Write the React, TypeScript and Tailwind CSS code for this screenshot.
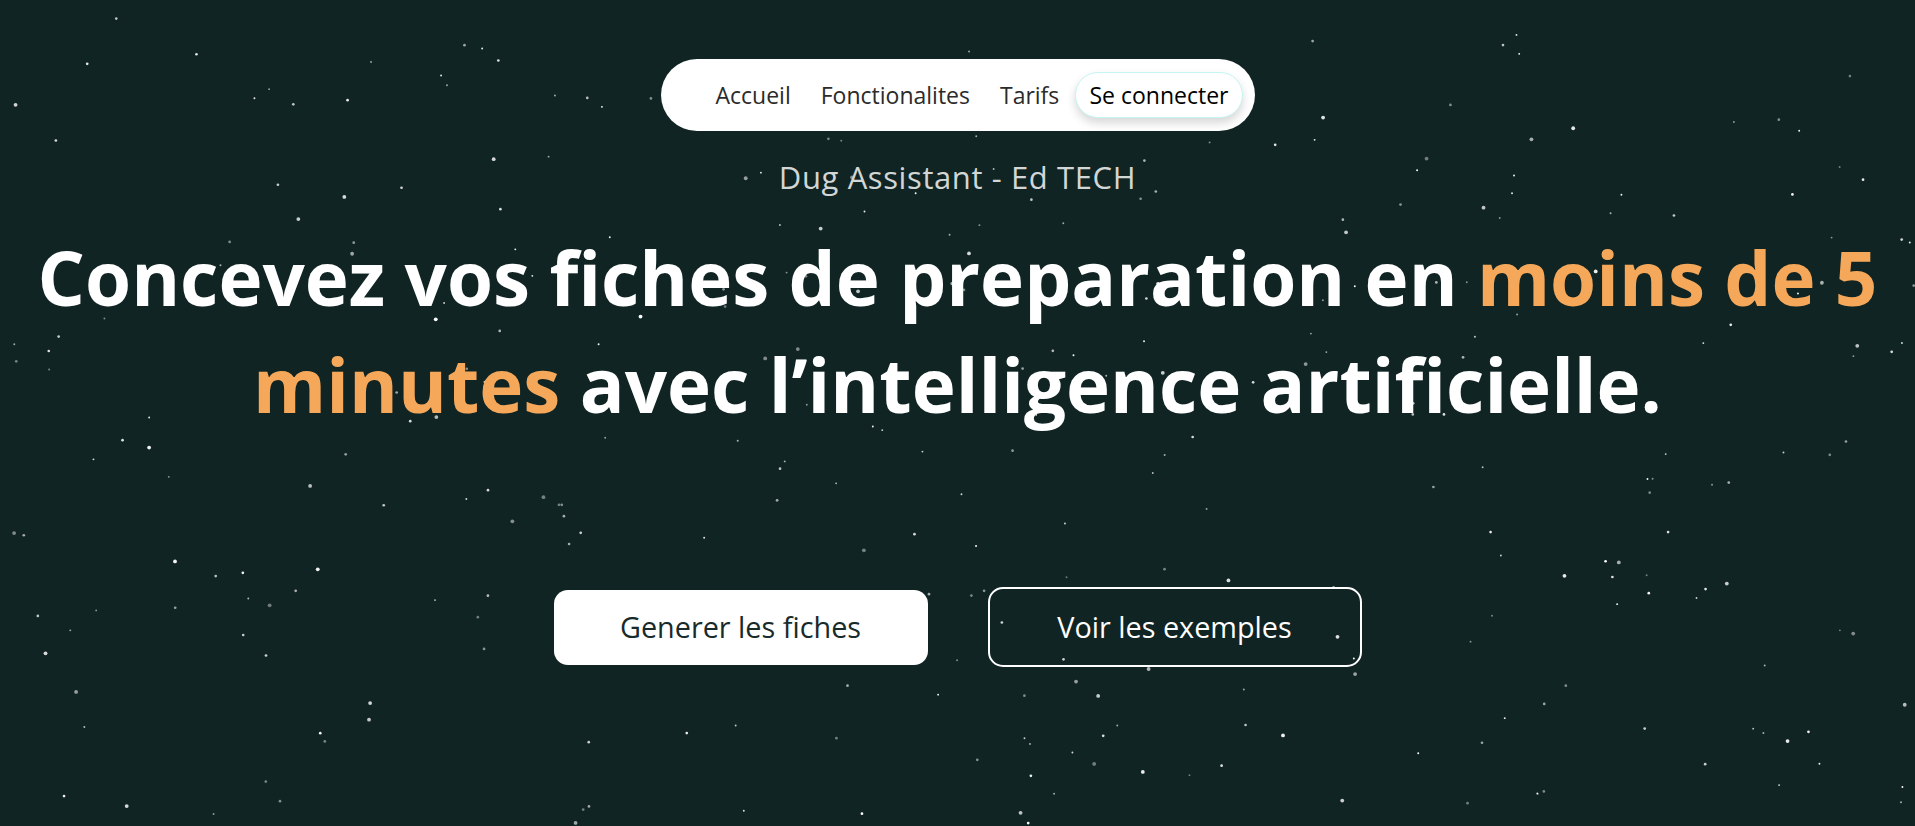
import { useMemo } from 'react';

// small seeded generator so the starfield is the same on every render
function makeStars(count: number, seed: number) {
  let s = seed;
  const rand = () => {
    s = (s * 1664525 + 1013904223) % 4294967296;
    return s / 4294967296;
  };
  const stars = [];
  for (let i = 0; i < count; i++) {
    const big = rand();
    stars.push({
      x: rand() * 1915,
      y: rand() * 826,
      r: big > 0.8 ? 1.9 : big > 0.4 ? 1.35 : 0.95,
      o: 0.4 + rand() * 0.6,
    });
  }
  return stars;
}

function Starfield() {
  const stars = useMemo(() => makeStars(340, 42), []);
  return (
    <svg
      className="absolute inset-0 w-full h-full pointer-events-none"
      viewBox="0 0 1915 826"
      preserveAspectRatio="none"
    >
      {stars.map((st, i) => (
        <circle key={i} cx={st.x} cy={st.y} r={st.r} fill="#ffffff" opacity={st.o} />
      ))}
    </svg>
  );
}

function Navbar() {
  return (
    <nav className="flex items-center w-[594px] h-[72px] bg-white rounded-full pl-[55px] pr-[12px]">
      <div className="flex items-center gap-[30px] text-[23px] text-[#2b2b2b]">
        <a href="#" className="leading-none">Accueil</a>
        <a href="#" className="leading-none">Fonctionalites</a>
        <a href="#" className="leading-none">Tarifs</a>
      </div>
      <button className="ml-auto h-[46px] px-[13px] rounded-full bg-white border border-[#c4f6f2] shadow-[0_5px_10px_rgba(0,0,0,0.16)] text-[23px] text-black leading-none">
        Se connecter
      </button>
    </nav>
  );
}

export default function App() {
  return (
    <div className="relative min-h-[826px] overflow-hidden bg-[#102423] font-['Open_Sans',sans-serif]">
      <Starfield />

      <main className="relative flex flex-col items-center pt-[59px]">
        <Navbar />

        <p className="mt-[26px] text-[31px] leading-[40px] tracking-[0.6px] text-[#d2d6d5]">
          Dug Assistant - Ed TECH
        </p>

        <h1 className="mt-[27px] text-center font-bold text-[74.5px] leading-[107px] text-white">
          <span className="block whitespace-nowrap">
            Concevez vos fiches de preparation en <span className="text-[#f6a85a]">moins de 5</span>
          </span>
          <span className="block whitespace-nowrap">
            <span className="text-[#f6a85a]">minutes</span> avec l&rsquo;intelligence artificielle.
          </span>
        </h1>

        <div className="mt-[149px] flex items-center gap-[60px]">
          <button className="w-[374px] h-[75px] rounded-[14px] bg-white text-[#182a29] text-[28.8px]">
            Generer les fiches
          </button>
          <button className="w-[374px] h-[80px] rounded-[15px] border-2 border-white text-white text-[28.8px]">
            Voir les exemples
          </button>
        </div>
      </main>
    </div>
  );
}
